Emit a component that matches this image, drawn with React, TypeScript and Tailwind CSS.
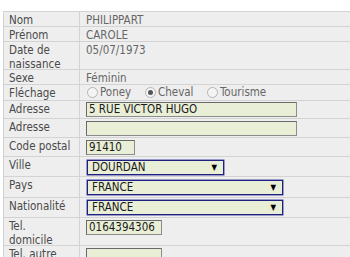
import React from "react";

const font = { fontFamily: '"DejaVu Sans Condensed", "DejaVu Sans", sans-serif' };

function Row({ h, label, children }: { h: string; label: React.ReactNode; children?: React.ReactNode }) {
  return (
    <div className={`flex border-b border-[#d3d3d3] ${h}`}>
      <div className="w-[76px] shrink-0 border-r border-[#d3d3d3] pl-[5px] pt-[1px] text-[11.5px] leading-[14px] text-[#4a4a4a]">
        {label}
      </div>
      <div className="flex-1 pl-[6px] pt-[1px] text-[11.5px] leading-[14px] text-[#666]">{children}</div>
    </div>
  );
}

function TextInput({ w, value }: { w: string; value?: string }) {
  return (
    <div
      className={`${w} h-[15px] border border-[#8c8c8c] border-t-[#6a6a6a] border-l-[#6a6a6a] bg-[#e9eed6] pl-[2px] text-[11.5px] leading-[13px] text-[#1a1a1a]`}
    >
      {value}
    </div>
  );
}

function Select({ w, value }: { w: string; value: string }) {
  return (
    <div className={`${w} h-[17px] rounded-[1px] border border-[#9a9ac8] p-0`}>
      <div className="flex h-full items-center justify-between border border-[#20207e] bg-[#e9eed6] pl-[4px] pr-[6px] text-[11.5px] leading-[13px] text-[#1a1a1a]">
        <span>{value}</span>
        <span className="text-[8px] leading-[8px] text-black">▼</span>
      </div>
    </div>
  );
}

function Radio({ checked, label, w }: { checked?: boolean; label: string; w: string }) {
  return (
    <div className={`flex items-center ${w}`}>
      <span className="mr-[2px] flex h-[11px] w-[11px] items-center justify-center rounded-full border border-[#b4b4b4] bg-[#f4f4f4]">
        {checked && <span className="h-[5px] w-[5px] rounded-full bg-[#555]" />}
      </span>
      <span>{label}</span>
    </div>
  );
}

export default function App() {
  return (
    <div className="h-[257px] w-[350px] overflow-hidden bg-white" style={font}>
      <div className="ml-[3px] mt-[11px] w-[400px] border-l border-t border-[#d3d3d3] bg-[#eeeeee]">
        <Row h="h-[15px]" label="Nom">PHILIPPART</Row>
        <Row h="h-[15px]" label="Prénom">CAROLE</Row>
        <Row h="h-[28px]" label={<>Date de<br />naissance</>}>05/07/1973</Row>
        <Row h="h-[15px]" label="Sexe">Féminin</Row>
        <Row h="h-[16px]" label="Fléchage">
          <div className="-mt-[1px] flex items-center pl-[1px]">
            <Radio w="w-[58px]" label="Poney" />
            <Radio w="w-[62px]" checked label="Cheval" />
            <Radio w="w-[70px]" label="Tourisme" />
          </div>
        </Row>
        <Row h="h-[18px]" label="Adresse">
          <TextInput w="w-[211px]" value="5 RUE VICTOR HUGO" />
        </Row>
        <Row h="h-[19px]" label="Adresse">
          <div className="pt-[1px]">
            <TextInput w="w-[211px]" />
          </div>
        </Row>
        <Row h="h-[19px]" label="Code postal">
          <div className="pt-[1px]">
            <TextInput w="w-[49px]" value="91410" />
          </div>
        </Row>
        <Row h="h-[20px]" label="Ville">
          <div className="pt-[1px]">
            <Select w="w-[139px]" value="DOURDAN" />
          </div>
        </Row>
        <Row h="h-[21px]" label="Pays">
          <div className="pt-[1px]">
            <Select w="w-[198px]" value="FRANCE" />
          </div>
        </Row>
        <Row h="h-[20px]" label="Nationalité">
          <Select w="w-[198px]" value="FRANCE" />
        </Row>
        <Row h="h-[28px]" label={<>Tel.<br />domicile</>}>
          <div className="pt-[1px]">
            <TextInput w="w-[76px]" value="0164394306" />
          </div>
        </Row>
        <Row h="h-[28px]" label={<>Tel. autre<br />&nbsp;</>}>
          <div className="pt-[1px]">
            <TextInput w="w-[76px]" />
          </div>
        </Row>
      </div>
    </div>
  );
}
